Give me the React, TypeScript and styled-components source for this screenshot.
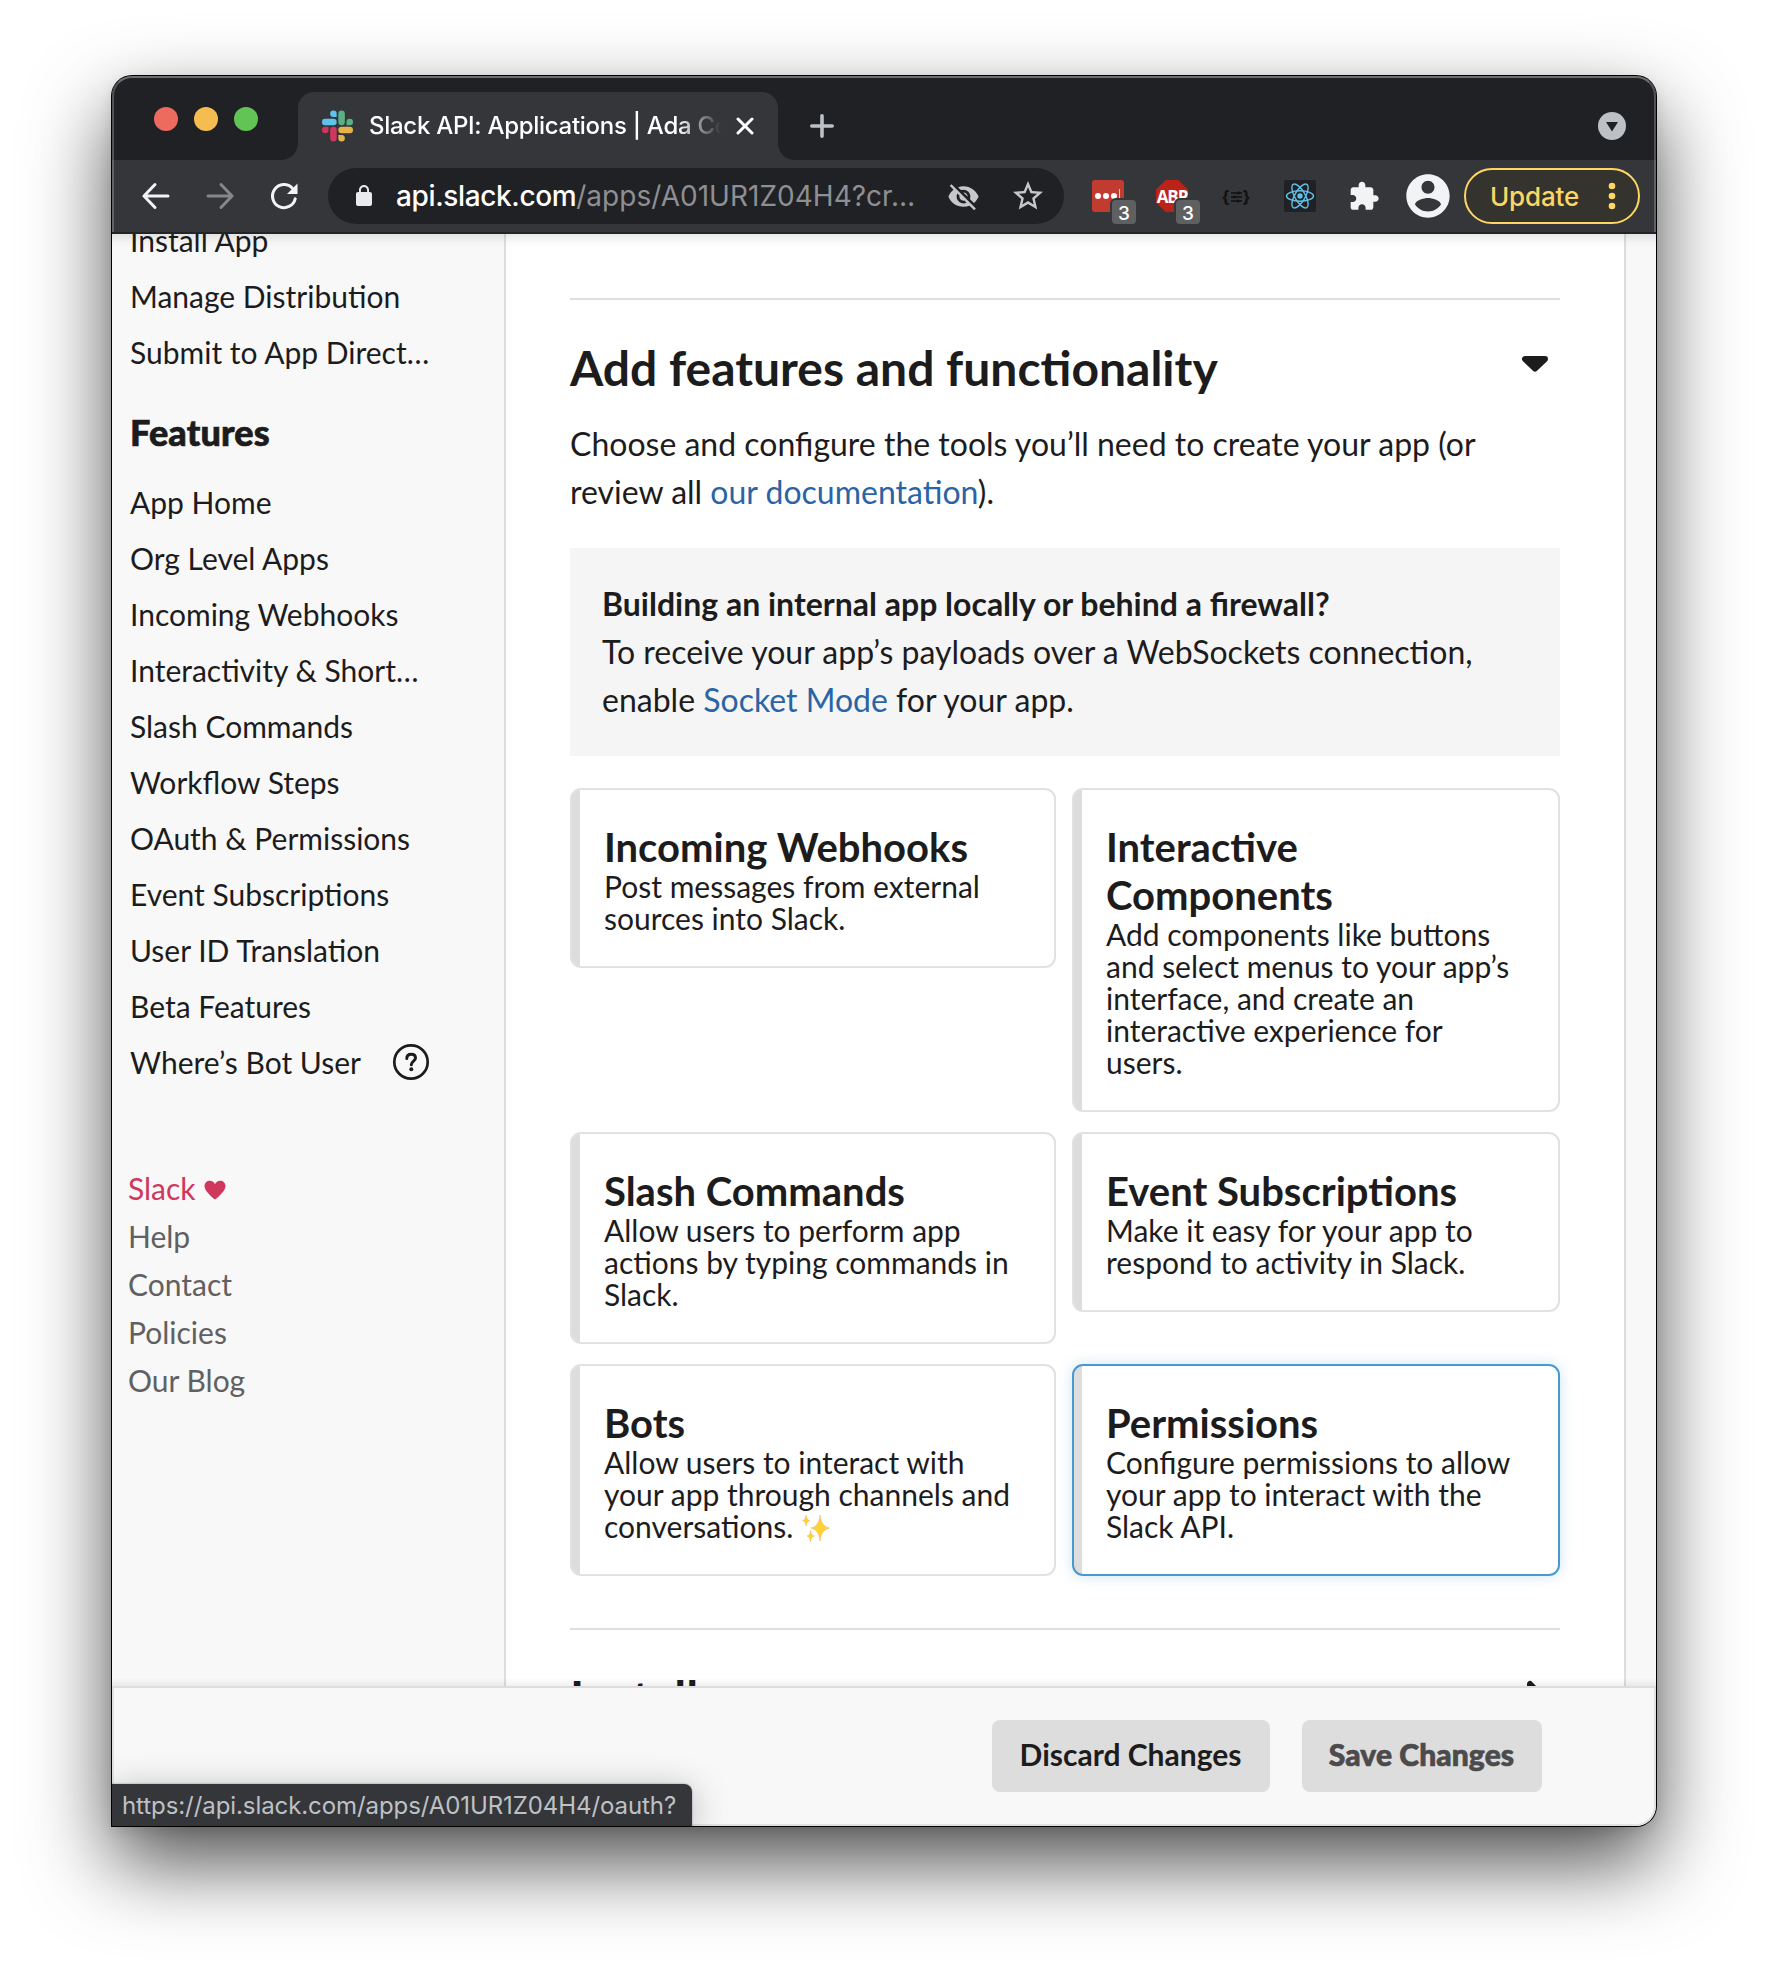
import React from 'react';
import styled, { createGlobalStyle } from 'styled-components';

const GlobalStyle = createGlobalStyle`
  *, *::before, *::after { box-sizing: border-box; }
  body { margin: 0; background: #fff; }
`;

const UI_FONT = 'Inter, "Liberation Sans", sans-serif';
const PAGE_FONT = 'Lato, "Liberation Sans", sans-serif';

const Desktop = styled.div`
  width: 1768px;
  height: 1974px;
  padding: 76px 0 0 112px;
  overflow: hidden;
  background: #fff;
`;

const Window = styled.div`
  display: flex;
  flex-direction: column;
  width: 1544px;
  height: 1750px;
  border-radius: 20px 20px 20px 0;
  box-shadow: 0 0 0 1px #000, 0 4px 14px rgba(0, 0, 0, 0.1), 0 36px 82px rgba(0, 0, 0, 0.7);
`;

/* ---------- Browser chrome ---------- */

const Chrome = styled.header`
  position: relative;
  z-index: 2;
  flex: none;
  height: 158px;
  border-radius: 20px 20px 0 0;
  overflow: hidden;
  background: #35363a;
  border-bottom: 2px solid #242427;
  &::after {
    content: '';
    position: absolute;
    inset: 0 0 -20px 0;
    border-radius: 20px 20px 0 0;
    border: 2px solid rgba(255, 255, 255, 0.22);
    border-top-color: rgba(255, 255, 255, 0.35);
    pointer-events: none;
  }
`;

const TabStrip = styled.div`
  display: flex;
  height: 84px;
  background: #202124;
`;

const Lights = styled.div`
  display: flex;
  gap: 16px;
  width: 186px;
  padding: 31px 0 0 42px;
`;

const Light = styled.span<{ $color: string }>`
  width: 24px;
  height: 24px;
  border-radius: 50%;
  background: ${(p) => p.$color};
`;

const Tab = styled.div`
  position: relative;
  display: flex;
  align-items: center;
  width: 480px;
  height: 68px;
  margin-top: 16px;
  padding: 0 24px;
  border-radius: 16px 16px 0 0;
  background: #35363a;
  &::before, &::after {
    content: '';
    position: absolute;
    bottom: 0;
    width: 16px;
    height: 16px;
  }
  &::before {
    left: -16px;
    background: radial-gradient(circle at 0 0, transparent 15.5px, #35363a 16px);
  }
  &::after {
    right: -16px;
    background: radial-gradient(circle at 100% 0, transparent 15.5px, #35363a 16px);
  }
`;

const TabTitle = styled.span`
  flex: none;
  width: 353px;
  margin-left: 16px;
  overflow: hidden;
  white-space: nowrap;
  font: 500 24px/34px ${UI_FONT};
  letter-spacing: -0.28px;
  color: #fff;
  mask-image: linear-gradient(90deg, #000 308px, transparent 352px);
`;

const TabClose = styled.svg`
  flex: none;
  margin-left: 14px;
`;

const NewTab = styled.svg`
  margin: 38px 0 0 32px;
`;

const TabSearch = styled.svg`
  margin: 36px 30px 0 auto;
`;

const Toolbar = styled.div`
  display: flex;
  align-items: center;
  height: 72px;
  padding-left: 28px;
`;

const NavButtons = styled.div`
  display: flex;
  gap: 32px;
  margin-right: 28px;
`;

const Omnibox = styled.div`
  display: flex;
  align-items: center;
  width: 736px;
  height: 56px;
  padding-left: 24px;
  border-radius: 28px;
  background: #202124;
`;

const Url = styled.span`
  width: 549px;
  margin-left: 20px;
  white-space: nowrap;
  font: 500 28px/40px ${UI_FONT};
  letter-spacing: -0.37px;
  color: #fff;
`;

const UrlPath = styled.span`
  font-weight: 400;
  letter-spacing: 0.02px;
  color: #8e8f92;
`;

const OmniIcon = styled.svg<{ $ml?: number }>`
  flex: none;
  margin-left: ${(p) => p.$ml ?? 0}px;
  fill: #c6c7c9;
`;

const Extensions = styled.div`
  display: flex;
  align-items: center;
  gap: 32px;
  margin-left: 28px;
`;

const Extension = styled.div`
  position: relative;
  display: flex;
  align-items: center;
  justify-content: center;
  width: 32px;
  height: 32px;
`;

const Badge = styled.span`
  position: absolute;
  left: 20px;
  top: 20px;
  width: 24px;
  height: 24px;
  border-radius: 4px;
  background: #5f6062;
  box-shadow: 0 0 0 2px #35363a;
  color: #fff;
  text-align: center;
  font: 500 19px/27px ${UI_FONT};
`;

const PassBox = styled.div`
  display: flex;
  align-items: center;
  gap: 2px;
  width: 32px;
  height: 32px;
  padding-left: 3px;
  border-radius: 3px;
  background: #c23b31;
`;

const PassDot = styled.i`
  flex: none;
  width: 6px;
  height: 6px;
  border-radius: 50%;
  background: #fff;
`;

const PassBar = styled.i`
  flex: none;
  width: 1px;
  height: 12px;
  margin-top: -3px;
  background: #f3c9c6;
`;

const AbpShape = styled.div`
  display: flex;
  justify-content: center;
  width: 32px;
  height: 32px;
  clip-path: polygon(30% 0, 70% 0, 100% 30%, 100% 70%, 70% 100%, 30% 100%, 0 70%, 0 30%);
  background: #b92318;
  color: #fff;
  white-space: nowrap;
  font: 700 17px/33px "Open Sans", sans-serif;
  letter-spacing: -1.1px;
`;

const Braces = styled.span`
  display: flex;
  align-items: center;
  gap: 1px;
  margin-top: 1px;
  font: 700 17px/20px ${UI_FONT};
  color: #111;
`;

const ReactTile = styled.div`
  width: 32px;
  height: 32px;
  border-radius: 2px;
  background: #202124;
`;

const Avatar = styled.svg`
  margin: 0 10px 0 22px;
`;

const UpdateButton = styled.div`
  display: flex;
  align-items: center;
  justify-content: space-between;
  width: 176px;
  height: 56px;
  padding: 0 22px 0 24px;
  border: 2px solid #fdd663;
  border-radius: 28px;
  background: #35332e;
  color: #fdd663;
  font: 500 26px/36px ${UI_FONT};
  letter-spacing: -0.15px;
`;

const UpdateLabel = styled.span`
  padding-top: 2px;
`;

/* ---------- Page ---------- */

const Page = styled.div`
  position: relative;
  z-index: 1;
  display: flex;
  flex: none;
  height: 1452px;
  overflow: hidden;
  background: #f8f8f8;
  font-family: ${PAGE_FONT};
  color: #1d1c1d;
  &::before {
    content: '';
    position: absolute;
    inset: 0 0 auto 0;
    height: 14px;
    background: linear-gradient(rgba(0, 0, 0, 0.09), rgba(0, 0, 0, 0.02) 60%, transparent);
  }
  &::after {
    content: '';
    position: absolute;
    inset: auto 0 0 0;
    height: 8px;
    background: linear-gradient(transparent, rgba(0, 0, 0, 0.06));
  }
`;

const Sidebar = styled.nav`
  flex: none;
  width: 392px;
  margin-top: -22px;
  padding-left: 18px;
`;

const NavItem = styled.div`
  display: flex;
  align-items: center;
  height: 56px;
  font-size: 30px;
  line-height: 56px;
  white-space: nowrap;
`;

const NavHeading = styled.h4`
  margin: 31px 0 20px;
  font-size: 36px;
  font-weight: 900;
  line-height: 43px;
  letter-spacing: 0.15px;
  -webkit-text-stroke: 0.7px currentColor;
`;

const HelpIcon = styled.svg`
  margin: 0 0 0 31px;
`;

const FooterLinks = styled.div`
  margin: 74px 0 0 -2px;
`;

const FooterLink = styled.div<{ $brand?: boolean }>`
  display: flex;
  align-items: center;
  height: 48px;
  font-size: 30px;
  line-height: 48px;
  color: ${(p) => (p.$brand ? '#cf375d' : '#616061')};
`;

const Heart = styled.svg`
  margin: 4px 0 0 8px;
`;

const Main = styled.main`
  flex: none;
  width: 1122px;
  height: 1452px;
  padding: 64px 64px 0;
  border: solid #ddd;
  border-width: 0 2px;
  background: #fff;
`;

const Section = styled.section`
  border-top: 2px solid #ddd;
  padding-top: 39px;
`;

const SectionHead = styled.div`
  display: flex;
  justify-content: space-between;
  margin-bottom: 23px;
`;

const SectionTitle = styled.h2`
  margin: 0;
  font-size: 48px;
  font-weight: 700;
  line-height: 58px;
  white-space: nowrap;
`;

const Caret = styled.svg<{ $mt: number; $mr: number }>`
  margin: ${(p) => p.$mt}px ${(p) => p.$mr}px 0 0;
  fill: #1d1c1d;
  stroke: #1d1c1d;
  stroke-width: 6px;
  stroke-linejoin: round;
`;

const Text = styled.p`
  margin: 0;
  font-size: 32px;
  line-height: 48px;
`;

const Line = styled.span`
  display: block;
  white-space: nowrap;
`;

const Link = styled.a`
  color: #2a64a4;
`;

const Callout = styled.div`
  margin: 32px 0;
  padding: 32px;
  background: #f5f5f5;
`;

const Cards = styled.div`
  display: grid;
  grid-template-columns: 486px 488px;
  column-gap: 16px;
  row-gap: 20px;
  align-items: start;
  margin-bottom: 52px;
`;

const Card = styled.article<{ $active?: boolean }>`
  padding: 33px 0 32px 32px;
  border: 2px solid ${(p) => (p.$active ? '#4799d1' : '#e1e1e1')};
  border-radius: 11px;
  background: linear-gradient(90deg, #ddd 8px, #fff 8px);
  box-shadow: ${(p) => (p.$active ? '0 0 14px rgba(71, 153, 209, 0.25)' : 'none')};
`;

const CardTitle = styled.h3`
  margin: 0 0 -1px;
  font-size: 40px;
  font-weight: 700;
  line-height: 48px;
`;

const CardText = styled.p`
  margin: 0;
  font-size: 30px;
  line-height: 32px;
`;

const Sparkles = styled.svg`
  margin: 4px 0 0 9px;
  vertical-align: top;
`;

const SaveBar = styled.footer`
  position: relative;
  z-index: 1;
  display: flex;
  justify-content: flex-end;
  gap: 32px;
  flex: none;
  height: 140px;
  padding: 32px 112px 0 0;
  border: 2px solid #e2e2e2;
  border-top-color: #ddd;
  border-radius: 0 0 20px 0;
  clip-path: inset(0 round 0 0 20px 0);
  background: #f8f8f8;
  font-family: ${PAGE_FONT};
`;

const Button = styled.button<{ $w: number; $muted?: boolean }>`
  width: ${(p) => p.$w}px;
  height: 72px;
  padding: 0 1px 4px 0;
  border: 0;
  border-radius: 8px;
  background: #ddd;
  color: ${(p) => (p.$muted ? '#4c4b4c' : '#1d1c1d')};
  font: ${(p) => (p.$muted ? 900 : 700)} 30px/68px ${PAGE_FONT};
  letter-spacing: ${(p) => (p.$muted ? 0.1 : 0)}px;
  -webkit-text-stroke: ${(p) => (p.$muted ? '0.7px' : '0')} currentColor;
  white-space: nowrap;
`;

const StatusBubble = styled.div`
  position: absolute;
  left: -2px;
  bottom: -2px;
  width: 580px;
  height: 42px;
  padding-left: 10px;
  border-radius: 0 8px 0 0;
  background: #35363a;
  box-shadow: 0 0 2px rgba(0, 0, 0, 0.4), 0 6px 36px rgba(0, 0, 0, 0.28);
  color: #bdc1c6;
  font: 400 24px/44px ${UI_FONT};
  letter-spacing: -0.08px;
  white-space: nowrap;
`;

const SlackLogo = () => (
  <svg width="32" height="32" viewBox="0 0 24 24">
    <path fill="#cf375d" d="M5.042 15.165a2.528 2.528 0 0 1-2.52 2.523A2.528 2.528 0 0 1 0 15.165a2.527 2.527 0 0 1 2.522-2.52h2.52v2.52zM6.313 15.165a2.527 2.527 0 0 1 2.521-2.52 2.527 2.527 0 0 1 2.521 2.52v6.313A2.528 2.528 0 0 1 8.834 24a2.528 2.528 0 0 1-2.521-2.522v-6.313z" />
    <path fill="#5ec3ee" d="M8.834 5.042a2.528 2.528 0 0 1-2.521-2.52A2.528 2.528 0 0 1 8.834 0a2.528 2.528 0 0 1 2.521 2.522v2.52H8.834zM8.834 6.313a2.528 2.528 0 0 1 2.521 2.521 2.528 2.528 0 0 1-2.521 2.521H2.522A2.528 2.528 0 0 1 0 8.834a2.528 2.528 0 0 1 2.522-2.521h6.312z" />
    <path fill="#58b182" d="M18.956 8.834a2.528 2.528 0 0 1 2.522-2.521A2.528 2.528 0 0 1 24 8.834a2.528 2.528 0 0 1-2.522 2.521h-2.522V8.834zM17.688 8.834a2.528 2.528 0 0 1-2.523 2.521 2.527 2.527 0 0 1-2.520-2.521V2.522A2.527 2.527 0 0 1 15.165 0a2.528 2.528 0 0 1 2.523 2.522v6.312z" />
    <path fill="#e5b34b" d="M15.165 18.956a2.528 2.528 0 0 1 2.523 2.522A2.528 2.528 0 0 1 15.165 24a2.527 2.527 0 0 1-2.520-2.522v-2.522h2.520zM15.165 17.688a2.527 2.527 0 0 1-2.520-2.523 2.526 2.526 0 0 1 2.520-2.520h6.313A2.527 2.527 0 0 1 24 15.165a2.528 2.528 0 0 1-2.522 2.523h-6.313z" />
  </svg>
);

const SparkleGlyph = () => (
  <Sparkles width="28" height="28" viewBox="0 0 28 28">
    <g fill="#fdd231" stroke="#f6b26b" strokeWidth="0.5">
      <path d="M18 1 Q19 12.500 27.500 14 Q19 15.500 18 27 Q17 15.500 9 14 Q17 12.500 18 1Z" />
      <path d="M4 1 Q4.600 6 8 6.500 Q4.600 7.200 4 12 Q3.400 7.200 0.500 6.500 Q3.400 6 4 1Z" />
      <path d="M8.500 16.500 Q9.100 21.300 12.500 22 Q9.100 22.700 8.500 28 Q7.900 22.700 5 22 Q7.900 21.300 8.500 16.500Z" />
    </g>
  </Sparkles>
);

const features = [
  'App Home',
  'Org Level Apps',
  'Incoming Webhooks',
  'Interactivity & Short…',
  'Slash Commands',
  'Workflow Steps',
  'OAuth & Permissions',
  'Event Subscriptions',
  'User ID Translation',
  'Beta Features',
];

interface CardData {
  title: string[];
  text: string[];
  active?: boolean;
  sparkles?: boolean;
}

const cards: CardData[] = [
  { title: ['Incoming Webhooks'], text: ['Post messages from external', 'sources into Slack.'] },
  {
    title: ['Interactive', 'Components'],
    text: [
      'Add components like buttons',
      'and select menus to your app’s',
      'interface, and create an',
      'interactive experience for',
      'users.',
    ],
  },
  { title: ['Slash Commands'], text: ['Allow users to perform app', 'actions by typing commands in', 'Slack.'] },
  { title: ['Event Subscriptions'], text: ['Make it easy for your app to', 'respond to activity in Slack.'] },
  {
    title: ['Bots'],
    text: ['Allow users to interact with', 'your app through channels and', 'conversations.'],
    sparkles: true,
  },
  {
    title: ['Permissions'],
    text: ['Configure permissions to allow', 'your app to interact with the', 'Slack API.'],
    active: true,
  },
];

const BrowserChrome = () => (
  <Chrome>
    <TabStrip>
      <Lights>
        <Light $color="#ed6a5e" />
        <Light $color="#f5bd4f" />
        <Light $color="#61c454" />
      </Lights>
      <Tab>
        <SlackLogo />
        <TabTitle>Slack API: Applications | Ada Co</TabTitle>
        <TabClose width="18" height="18" viewBox="0 0 18 18">
          <path d="M2 2L16 16M16 2L2 16" stroke="#fff" strokeWidth="3" strokeLinecap="round" />
        </TabClose>
      </Tab>
      <NewTab width="24" height="24" viewBox="0 0 24 24">
        <path d="M12 1.800V22.200M1.800 12H22.200" stroke="#bdc1c6" strokeWidth="3.600" strokeLinecap="round" />
      </NewTab>
      <TabSearch width="28" height="28" viewBox="0 0 28 28">
        <circle cx="14" cy="14" r="14" fill="#bdc1c6" />
        <path d="M8 10H20L14 19.500Z" fill="#202124" />
      </TabSearch>
    </TabStrip>
    <Toolbar>
      <NavButtons>
        <svg width="32" height="32" viewBox="0 0 32 32">
          <path d="M15 4.500L4 16L15 27.500M4 16H28" fill="none" stroke="#f1f3f4" strokeWidth="3" strokeLinecap="round" />
        </svg>
        <svg width="32" height="32" viewBox="0 0 32 32">
          <path d="M17 4.500L28 16L17 27.500M28 16H4" fill="none" stroke="#86878a" strokeWidth="3" strokeLinecap="round" />
        </svg>
        <svg width="32" height="32" viewBox="0 0 32 32">
          <path d="M27.200 18.800A11.500 11.500 0 1 1 24.400 8.200" fill="none" stroke="#f1f3f4" strokeWidth="3" strokeLinecap="round" />
          <path d="M29.500 3.500V14H19Z" fill="#f1f3f4" />
        </svg>
      </NavButtons>
      <Omnibox>
        <OmniIcon width="24" height="24" viewBox="0 0 24 24">
          <path fill="#e8eaed" d="M18 8h-1V6c0-2.760-2.240-5-5-5S7 3.240 7 6v2H6c-1.100 0-2 .9-2 2v10c0 1.100.9 2 2 2h12c1.100 0 2-.9 2-2V10c0-1.100-.9-2-2-2zM15.100 8H8.900V6c0-1.710 1.390-3.100 3.100-3.100s3.100 1.390 3.100 3.100v2z" />
        </OmniIcon>
        <Url>
          api.slack.com<UrlPath>/apps/A01UR1Z04H4?cr…</UrlPath>
        </Url>
        <OmniIcon $ml={2} width="33" height="33" viewBox="0 0 24 24">
          <path d="M12 7c2.760 0 5 2.240 5 5 0 .65-.13 1.260-.36 1.830l2.920 2.920c1.510-1.260 2.700-2.890 3.430-4.750-1.730-4.390-6-7.500-11-7.500-1.400 0-2.740.25-3.980.7l2.160 2.160C10.740 7.130 11.350 7 12 7zM2 4.270l2.280 2.280.46.46C3.080 8.300 1.780 10.020 1 12c1.730 4.390 6 7.500 11 7.500 1.550 0 3.030-.3 4.380-.84l.42.42L19.730 22 21 20.730 3.270 3 2 4.270zM7.530 9.800l1.550 1.550c-.05.21-.08.43-.08.65 0 1.660 1.340 3 3 3 .22 0 .44-.03.65-.08l1.550 1.550c-.67.33-1.410.53-2.200.53-2.760 0-5-2.240-5-5 0-.79.2-1.530.53-2.200zm4.310-.78l3.150 3.150.02-.16c0-1.660-1.340-3-3-3l-.17.010z" />
        </OmniIcon>
        <OmniIcon $ml={30} width="36" height="36" viewBox="0 0 24 24">
          <path d="M22 9.240l-7.190-.62L12 2 9.190 8.630 2 9.240l5.460 4.730L5.820 21 12 17.270 18.180 21l-1.630-7.030L22 9.240zM12 15.400l-3.760 2.270 1-4.280-3.320-2.880 4.380-.38L12 6.100l1.710 4.040 4.380.38-3.320 2.880 1 4.280L12 15.400z" />
        </OmniIcon>
      </Omnibox>
      <Extensions>
        <Extension>
          <PassBox>
            <PassDot />
            <PassDot />
            <PassDot />
            <PassBar />
          </PassBox>
          <Badge>3</Badge>
        </Extension>
        <Extension>
          <AbpShape>ABP</AbpShape>
          <Badge>3</Badge>
        </Extension>
        <Extension>
          <Braces>
            {'{'}
            <svg width="11" height="12" viewBox="0 0 11 12">
              <path d="M0 2H11M0 6H11M0 10H11" stroke="#111" strokeWidth="1.500" />
              <path d="M7.500 0.500V3.500M3.500 4.500V7.500M7 8.500V11.500" stroke="#111" strokeWidth="2" />
            </svg>
            {'}'}
          </Braces>
        </Extension>
        <Extension>
          <ReactTile>
            <svg width="32" height="32" viewBox="0 0 32 32" fill="none" stroke="#61bfe8" strokeWidth="1.400">
              <ellipse cx="16" cy="16" rx="13.500" ry="5.200" />
              <ellipse cx="16" cy="16" rx="13.500" ry="5.200" transform="rotate(60 16 16)" />
              <ellipse cx="16" cy="16" rx="13.500" ry="5.200" transform="rotate(120 16 16)" />
              <circle cx="16" cy="16" r="2.700" fill="#61bfe8" stroke="none" />
            </svg>
          </ReactTile>
        </Extension>
        <Extension>
          <svg width="33" height="33" viewBox="0 0 24 24" fill="#f1f3f4">
            <path d="M20.500 11H19V7c0-1.100-.9-2-2-2h-4V3.500C13 2.120 11.880 1 10.500 1S8 2.120 8 3.500V5H4c-1.100 0-1.990.9-1.990 2v3.800H3.500c1.490 0 2.700 1.210 2.700 2.700s-1.210 2.700-2.700 2.700H2V20c0 1.100.9 2 2 2h3.800v-1.500c0-1.490 1.210-2.700 2.700-2.700 1.490 0 2.700 1.210 2.700 2.700V22H17c1.100 0 2-.9 2-2v-4h1.500c1.380 0 2.500-1.120 2.500-2.500S21.880 11 20.500 11z" />
          </svg>
        </Extension>
      </Extensions>
      <Avatar width="52" height="52" viewBox="0 0 24 24" fill="#f1f3f4">
        <path d="M12 2C6.480 2 2 6.480 2 12s4.480 10 10 10 10-4.480 10-10S17.520 2 12 2zm0 3c1.660 0 3 1.340 3 3s-1.340 3-3 3-3-1.340-3-3 1.340-3 3-3zm0 14.200c-2.500 0-4.710-1.280-6-3.220.03-1.990 4-3.080 6-3.080 1.990 0 5.970 1.090 6 3.080-1.290 1.940-3.500 3.220-6 3.220z" />
      </Avatar>
      <UpdateButton>
        <UpdateLabel>Update</UpdateLabel>
        <svg width="8" height="28" viewBox="0 0 8 28" fill="#fdd663">
          <circle cx="4" cy="4" r="3.300" />
          <circle cx="4" cy="14" r="3.300" />
          <circle cx="4" cy="24" r="3.300" />
        </svg>
      </UpdateButton>
    </Toolbar>
  </Chrome>
);

export default function App() {
  return (
    <Desktop>
      <GlobalStyle />
      <Window>
        <BrowserChrome />
        <Page>
          <Sidebar>
            <NavItem>Install App</NavItem>
            <NavItem>Manage Distribution</NavItem>
            <NavItem>Submit to App Direct…</NavItem>
            <NavHeading>Features</NavHeading>
            {features.map((f) => (
              <NavItem key={f}>{f}</NavItem>
            ))}
            <NavItem>
              Where’s Bot User
              <HelpIcon width="38" height="38" viewBox="0 0 38 38" fill="none" stroke="#1d1c1d">
                <circle cx="19" cy="19" r="16.700" strokeWidth="2.700" />
                <path d="M14.800 15.400C14.800 12.800 16.600 11.200 19.200 11.200S23.500 12.800 23.500 15.100C23.500 18.200 19.300 18 19.300 21.800" strokeWidth="3" strokeLinecap="round" />
                <circle cx="19.300" cy="26.200" r="2" fill="#1d1c1d" stroke="none" />
              </HelpIcon>
            </NavItem>
            <FooterLinks>
              <FooterLink $brand>
                Slack
                <Heart width="22" height="20" viewBox="0 0 22 20" fill="#cf375d">
                  <path d="M11 19.500C10 19 0.500 11.500 0.500 6.300C0.500 2.800 3 0.800 5.800 0.800C8.200 0.800 10.200 2.200 11 4.200C11.800 2.200 13.800 0.800 16.200 0.800C19 0.800 21.500 2.800 21.500 6.300C21.500 11.500 12 19 11 19.500Z" />
                </Heart>
              </FooterLink>
              <FooterLink>Help</FooterLink>
              <FooterLink>Contact</FooterLink>
              <FooterLink>Policies</FooterLink>
              <FooterLink>Our Blog</FooterLink>
            </FooterLinks>
          </Sidebar>
          <Main>
            <Section>
              <SectionHead>
                <SectionTitle>Add features and functionality</SectionTitle>
                <Caret $mt={16} $mr={11} width="28" height="18" viewBox="0 0 28 18">
                  <path d="M4 4H24L14 13.500Z" />
                </Caret>
              </SectionHead>
              <Text>
                <Line>Choose and configure the tools you’ll need to create your app (or</Line>
                <Line>
                  review all <Link>our documentation</Link>).
                </Line>
              </Text>
              <Callout>
                <Text>
                  <Line as="strong">Building an internal app locally or behind a firewall?</Line>
                  <Line>To receive your app’s payloads over a WebSockets connection,</Line>
                  <Line>
                    enable <Link>Socket Mode</Link> for your app.
                  </Line>
                </Text>
              </Callout>
              <Cards>
                {cards.map((c) => (
                  <Card key={c.title[0]} $active={c.active}>
                    <CardTitle>
                      {c.title.map((t) => (
                        <Line key={t}>{t}</Line>
                      ))}
                    </CardTitle>
                    <CardText>
                      {c.text.map((t, i) => (
                        <Line key={t}>
                          {t}
                          {c.sparkles && i === c.text.length - 1 && <SparkleGlyph />}
                        </Line>
                      ))}
                    </CardText>
                  </Card>
                ))}
              </Cards>
            </Section>
            <Section>
              <SectionHead>
                <SectionTitle>Install your app</SectionTitle>
                <Caret $mt={11} $mr={16} width="18" height="28" viewBox="0 0 18 28">
                  <path d="M4 4V24L13.500 14Z" />
                </Caret>
              </SectionHead>
            </Section>
          </Main>
        </Page>
        <SaveBar>
          <Button $w={278}>Discard Changes</Button>
          <Button $w={240} $muted>
            Save Changes
          </Button>
          <StatusBubble>https://api.slack.com/apps/A01UR1Z04H4/oauth?</StatusBubble>
        </SaveBar>
      </Window>
    </Desktop>
  );
}
